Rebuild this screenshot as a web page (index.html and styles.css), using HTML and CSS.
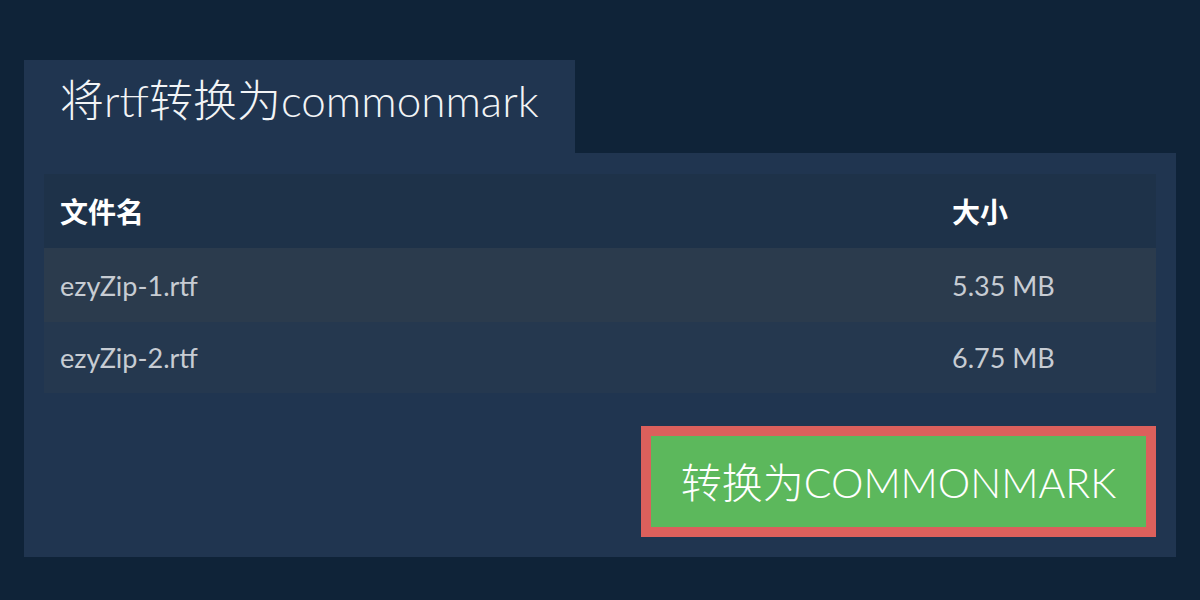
FILE: index.html
```html
<!DOCTYPE html>
<html lang="zh">
<head>
<meta charset="utf-8">
<link rel="stylesheet" href="styles.css">
</head>
<body>
<div class="wrap">
  <div class="tab">将rtf转换为commonmark</div>
  <div class="panel">
    <div class="table">
      <div class="row head"><div class="c1">文件名</div><div class="c2">大小</div></div>
      <div class="row r1"><div class="c1">ezyZip-1.rtf</div><div class="c2">5.35 MB</div></div>
      <div class="row r2"><div class="c1">ezyZip-2.rtf</div><div class="c2">6.75 MB</div></div>
    </div>
    <div class="actions">
      <button class="btn">转换为COMMONMARK</button>
    </div>
  </div>
</div>
</body>
</html>
```

FILE: styles.css
```css
html, body {
  margin: 0;
  padding: 0;
  background: #0f2338;
  font-family: Lato, "Noto Sans CJK SC", sans-serif;
}
.wrap {
  padding: 60px 24px 0;
}
.tab {
  display: inline-block;
  background: #203550;
  color: #f2f4f6;
  font-size: 44px;
  font-weight: 300;
  height: 93px;
  line-height: 80px;
  padding: 0 0 0 36px;
  box-sizing: border-box;
  width: 551px;
  white-space: nowrap;
}
.panel {
  background: #203550;
  padding: 21px 20px 20px;
}
.table {
  display: flex;
  flex-direction: column;
}
.row {
  display: grid;
  grid-template-columns: 1fr 204px;
  align-items: center;
  font-size: 27px;
  color: #c7ccd3;
}
.c1 { padding-left: 16px; }
.head {
  height: 74px;
  background: #1e3249;
  color: #ffffff;
  font-weight: 700;
  font-size: 28px;
}
.r1 { height: 74px; background: #2b3b4d; }
.r2 { height: 71px; background: #25384f; }
.actions {
  display: flex;
  justify-content: flex-end;
  margin-top: 33px;
}
.btn {
  width: 515px;
  height: 111px;
  background: #5cb85c;
  border: 10px solid #dc605c;
  color: #ffffff;
  font-family: Lato, "Noto Sans CJK SC", sans-serif;
  font-size: 41px;
  font-weight: 300;
  padding: 0 0 4px;
}
```
